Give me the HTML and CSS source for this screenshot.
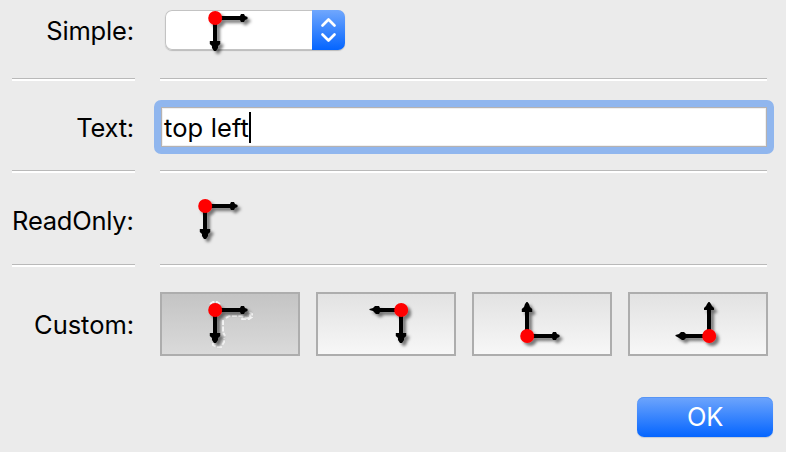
FILE: index.html
```
<!DOCTYPE html>
<html lang="en">
<head>
<meta charset="utf-8">
<title>Origin settings</title>
<link rel="stylesheet" href="styles.css">
</head>
<body>
<svg class="defs" width="0" height="0" aria-hidden="true">
  <defs>
    <filter id="shadow" x="-20%" y="-20%" width="150%" height="150%">
      <feDropShadow dx="3" dy="3" stdDeviation="1.5" flood-color="#000" flood-opacity=".5"/>
    </filter>
    <symbol id="top-left" viewBox="0 0 52 50">
      <g filter="url(#shadow)">
        <path d="M10 10H36M10 10V36" stroke="#000" stroke-width="4"/>
        <path d="M35 8L36 6H39L40 8L42.5 9V11L40 12L39 14H36L35 12ZM4.8 33H15.2V36L13 38V40L11 43H9L7 40V38L4.8 36Z"/>
        <circle cx="10.2" cy="10" r="7" fill="#f00"/>
      </g>
    </symbol>
  </defs>
</svg>
<main class="form">
  <div class="row row-simple">
    <label class="label w-simple">Simple:</label>
    <div class="field">
      <div class="combo">
        <svg class="origin" width="52" height="50"><use href="#top-left"/></svg>
        <span class="stepper">
          <svg width="33" height="40" fill="none" stroke="#fff" stroke-width="2.7" stroke-linecap="round" stroke-linejoin="round"><path d="M10.5 15.5L16.5 9.5L22.5 15.5M10.5 24.5L16.5 30.5L22.5 24.5"/></svg>
        </span>
      </div>
    </div>
  </div>
  <div class="rule"><i></i><i></i></div>
  <div class="row row-text">
    <label class="label w-text">Text:</label>
    <div class="field"><div class="input"><span class="value">top left</span><b class="caret"></b></div></div>
  </div>
  <div class="rule"><i></i><i></i></div>
  <div class="row row-readonly">
    <label class="label w-readonly">ReadOnly:</label>
    <div class="field"><svg class="origin readonly" width="52" height="50"><use href="#top-left"/></svg></div>
  </div>
  <div class="rule"><i></i><i></i></div>
  <div class="row row-custom">
    <label class="label w-custom">Custom:</label>
    <div class="field choices">
      <div class="choice selected">
        <svg class="origin" width="52" height="50">
          <path d="M5 4L8 2H12L15 4M21 18L24 16H36L42 18H45V14M44 12L47 14V17L44 19H36M18 20V32L20 36M8 43V45L12 47H16L19 42V38" fill="none" stroke="#f4f4f4" stroke-width="2" stroke-dasharray="5 1.5"/>
          <use href="#top-left"/>
        </svg>
      </div>
      <div class="choice">
        <svg class="origin" width="52" height="50"><g filter="url(#shadow)">
          <path d="M40 10H15M40 10V36" stroke="#000" stroke-width="4"/>
          <path d="M8.5 9L12 8L14 6H18L19 8V12L18 14H15L12 11L8.5 10ZM34.8 33H45.2V36L43 38V40L41 43H39L37 40V38L34.8 36Z"/>
          <circle cx="40.2" cy="10" r="7" fill="#f00"/>
        </g></svg>
      </div>
      <div class="choice">
        <svg class="origin" width="52" height="50"><g filter="url(#shadow)">
          <path d="M10 36H36M10 36V10" stroke="#000" stroke-width="4"/>
          <path d="M35 34L36 32H39L40 34L42.5 35V37L40 38L39 40H36L35 38ZM4.8 12V9L7 7L8 4L9.5 2H10.5L12 4L13 7L15.2 9V12Z"/>
          <circle cx="10.2" cy="36" r="7" fill="#f00"/>
        </g></svg>
      </div>
      <div class="choice">
        <svg class="origin" width="52" height="50"><g filter="url(#shadow)">
          <path d="M36 36H8M36 36V8" stroke="#000" stroke-width="4"/>
          <path d="M2.5 35L6 34L8 32H11L13 34V38L11 40H9L6 38L2.5 36ZM31 10V8L33 6L34 4L35.5 2H36.5L38 4L39 6L41 8V10Z"/>
          <circle cx="36.2" cy="36" r="7" fill="#f00"/>
        </g></svg>
      </div>
    </div>
  </div>
  <div class="actions"><button class="ok">OK</button></div>
</main>
</body>
</html>
```
FILE: styles.css
```
* { box-sizing: border-box; }
html, body { margin: 0; }
body {
  width: 786px;
  height: 452px;
  overflow: hidden;
  background: #ebebeb;
  color: #000;
  font: 25.5px/32px Inter, "Liberation Sans", sans-serif;
}
.defs { position: absolute; }
.form { display: flex; flex-direction: column; }
.row, .rule {
  display: grid;
  grid-template-columns: 123px 607px;
  column-gap: 25px;
  padding-left: 12px;
}
.row { align-items: start; }
.rule i { height: 3px; background: #fff; border-top: 1px solid #b9b9b9; }
.label { text-align: right; white-space: nowrap; padding-right: 1px; }
.w-simple { letter-spacing: -.15px; }
.w-text { letter-spacing: -.2px; }
.w-readonly { letter-spacing: -.25px; padding-right: 1.5px; }
.w-custom { letter-spacing: -.05px; }
.origin { display: block; overflow: visible; flex: none; }
.row-simple { height: 78px; padding-top: 10px; }
.row-simple .label { padding-top: 5px; }
.row-text { height: 89px; padding-top: 26px; }
.row-text .label { padding-top: 5px; }
.row-readonly { height: 91px; padding-top: 23px; }
.row-readonly .label { padding-top: 9px; }
.row-custom { height: 89px; padding-top: 25px; }
.row-custom .label { padding-top: 17px; }
.combo {
  display: flex;
  width: 180px;
  height: 40px;
  margin-left: 5px;
  padding-left: 40px;
  border-radius: 7px;
  background: #fff;
  box-shadow: inset 0 0 0 1px #c3c3c3, 0 1px 1px #bbb;
}
.combo .origin { margin-top: -2px; }
.stepper {
  width: 33px;
  height: 40px;
  margin-left: auto;
  border-radius: 0 7px 7px 0;
  background: linear-gradient(#70a7fd, #0465ff);
}
.stepper svg { display: block; }
.input {
  display: flex;
  height: 54px;
  width: 620px;
  margin: -7px 0 0 -6px;
  padding: 3px 0 0 2px;
  border: 7px solid #90b6ee;
  border-radius: 7px;
  background: #fff;
  box-shadow: inset 0 0 0 1px #b5b2b2, inset 0 0 0 2px #f0f0f0;
  white-space: nowrap;
}
.value { padding: 2px 0 0 1px; letter-spacing: .12px; }
.caret { width: 2px; height: 31px; margin-top: 2px; background: #000; }
.readonly { margin-left: 35px; }
.choices { display: flex; gap: 16px; }
.choice {
  flex: none;
  width: 140px;
  height: 64px;
  padding: 6px 0 0 43px;
  border: 2px solid #adadad;
  background: linear-gradient(#e2e2e2, #f7f7f7);
}
.choice.selected { background: linear-gradient(#c4c4c4, #dadada); }
.actions { display: flex; justify-content: flex-end; padding: 41px 13px 0 0; }
.ok {
  width: 136px;
  height: 40px;
  padding: 0;
  border: 0;
  border-radius: 7px;
  background: linear-gradient(#6ea5fc, #0465ff);
  box-shadow: inset 0 1px #5795f5, 0 1px 1px #c2cbd9;
  color: #fff;
  font: inherit;
  letter-spacing: -.2px;
}
```
